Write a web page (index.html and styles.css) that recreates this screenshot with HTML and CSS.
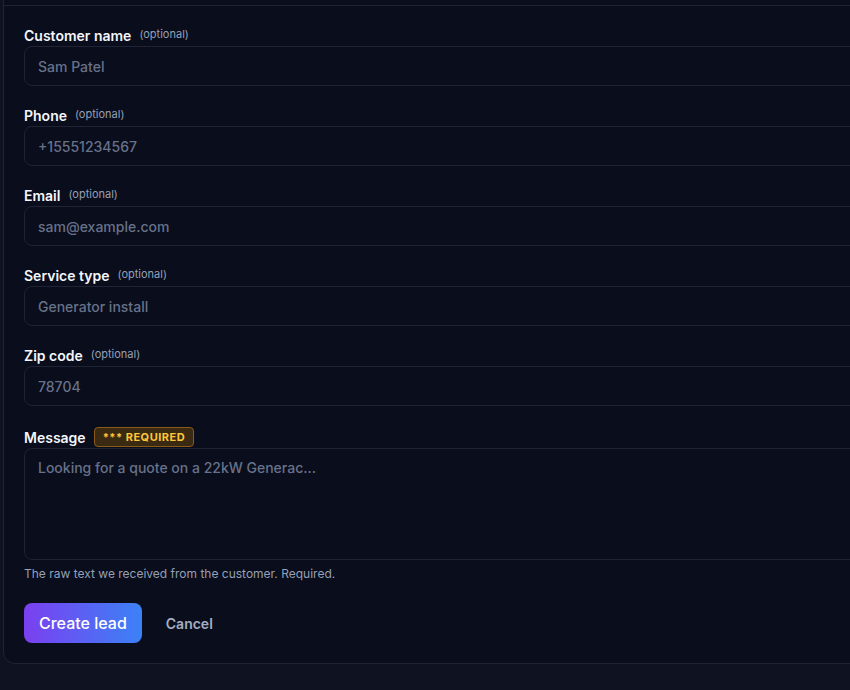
FILE: index.html
```html
<!DOCTYPE html>
<html lang="en">
<head>
    <meta charset="UTF-8">
    <title>New lead</title>
    <link rel="stylesheet" href="styles.css">
</head>
<body>
    <div class="card">
        <div class="card-header"></div>
        <form class="lead-form">
            <div class="field">
                <label for="name">Customer name <span class="optional">(optional)</span></label>
                <input type="text" id="name" placeholder="Sam Patel">
            </div>
            <div class="field">
                <label for="phone">Phone <span class="optional">(optional)</span></label>
                <input type="text" id="phone" placeholder="+15551234567">
            </div>
            <div class="field">
                <label for="email">Email <span class="optional">(optional)</span></label>
                <input type="text" id="email" placeholder="sam@example.com">
            </div>
            <div class="field">
                <label for="service">Service type <span class="optional">(optional)</span></label>
                <input type="text" id="service" placeholder="Generator install">
            </div>
            <div class="field">
                <label for="zip">Zip code <span class="optional">(optional)</span></label>
                <input type="text" id="zip" placeholder="78704">
            </div>
            <div class="field field-message">
                <label for="message">Message <span class="required">*** REQUIRED</span></label>
                <textarea id="message" placeholder="Looking for a quote on a 22kW Generac..."></textarea>
                <p class="hint">The raw text we received from the customer. Required.</p>
            </div>
            <div class="actions">
                <button type="button" class="btn-primary">Create lead</button>
                <button type="button" class="btn-cancel">Cancel</button>
            </div>
        </form>
    </div>
</body>
</html>
```
FILE: styles.css
```css
:root {
    --page-bg: #0f1221;
    --card-bg: #0a0d1b;
    --border-color: #1f2334;
    --text-color: #f4f6fb;
    --muted: #94a0b8;
    --placeholder: #67728a;
}

* {
    box-sizing: border-box;
}

body {
    margin: 0;
    background: var(--page-bg);
    font-family: Inter, "Noto Sans", sans-serif;
    color: var(--text-color);
    overflow: hidden;
}

.card {
    width: 900px;
    margin: -20px 0 0 3px;
    background: var(--card-bg);
    border: 1px solid var(--border-color);
    border-radius: 12px;
}

.card-header {
    height: 25px;
    border-bottom: 1px solid var(--border-color);
}

.lead-form {
    padding: 20px;
    display: flex;
    flex-direction: column;
    gap: 20px;
}

.field label {
    display: flex;
    align-items: center;
    gap: 8px;
    height: 20px;
    padding-bottom: 2px;
    font-size: 14px;
    font-weight: 600;
}

.field-message {
    margin-top: 2px;
}

.optional {
    font-size: 11px;
    font-weight: 400;
    color: var(--muted);
    position: relative;
    top: -1px;
}

.required {
    font-size: 11px;
    font-weight: 700;
    color: #fcc83a;
    background: #3a2a11;
    border: 1px solid #8a5a17;
    border-radius: 4px;
    padding: 2px 8px;
    letter-spacing: 0.5px;
}

.field input,
.field textarea {
    display: block;
    width: 100%;
    height: 40px;
    background: var(--card-bg);
    border: 1px solid var(--border-color);
    border-radius: 8px;
    padding: 0 13px;
    color: var(--text-color);
    font-family: inherit;
    font-size: 14px;
}

.field textarea {
    height: 112px;
    padding: 10px 13px;
    resize: none;
}

.field input::placeholder,
.field textarea::placeholder {
    color: var(--placeholder);
    font-weight: 500;
}

.hint {
    margin: 6px 0 0;
    font-size: 12px;
    color: var(--muted);
}

.actions {
    display: flex;
    align-items: center;
    gap: 8px;
    margin-top: 2px;
}

.btn-primary {
    height: 40px;
    padding: 0 15px;
    border: none;
    border-radius: 8px;
    background: linear-gradient(90deg, #7b3ff0, #3b82f6);
    color: #fff;
    font-family: inherit;
    font-size: 16px;
    font-weight: 500;
}

.btn-cancel {
    height: 40px;
    padding: 0 16px;
    border: none;
    background: transparent;
    color: #a3adc2;
    font-family: inherit;
    font-size: 14px;
    font-weight: 600;
}
```
